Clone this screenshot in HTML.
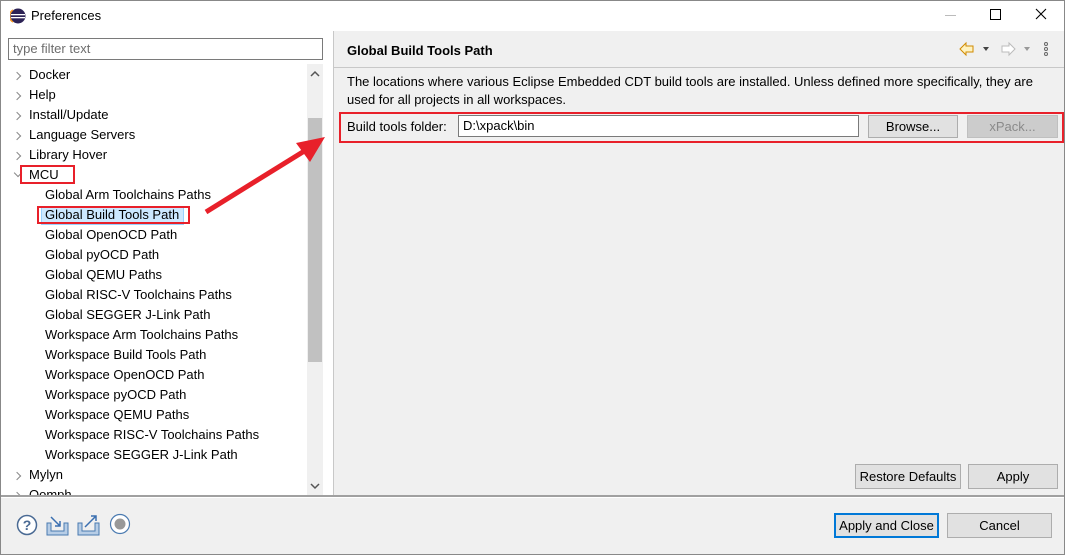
<!DOCTYPE html><html><head><style>
body{margin:0;width:1065px;height:555px;overflow:hidden;background:#f0f0f0;font-family:"Liberation Sans",sans-serif;font-size:13px;color:#000;position:relative}
.a{position:absolute;white-space:nowrap}
.t{position:absolute;line-height:20px;white-space:nowrap}
.btn{position:absolute;background:#e1e1e1;border:1px solid #adadad;box-sizing:border-box;text-align:center;font-size:13px}
.chev{position:absolute;width:5px;height:5px;border-right:1.5px solid #888;border-top:1.5px solid #888;transform:rotate(45deg)}
</style></head><body>
<div class="a" style="left:0;top:0;width:1063px;height:553px;border:1px solid #888"></div>
<div class="a" style="left:1px;top:1px;width:1063px;height:30px;background:#fff"></div>
<svg class="a" style="left:10px;top:8px" width="16" height="16"><circle cx="8" cy="8" r="7.5" fill="#2c2255"/><rect x="1" y="6" width="14" height="1.3" fill="#fff"/><rect x="1" y="9" width="14" height="1.3" fill="#fff"/><path d="M3 2 A7 7 0 0 0 3 14" stroke="#f7941e" stroke-width="1.5" fill="none"/></svg>
<div class="a" style="left:31px;top:8px;font-size:13px">Preferences</div>
<div class="a" style="left:945px;top:15px;width:11px;height:1px;background:#bbb"></div>
<div class="a" style="left:990px;top:9px;width:9px;height:9px;border:1px solid #000"></div>
<svg class="a" style="left:1035px;top:8px" width="12" height="12"><path d="M1 1L11 11M11 1L1 11" stroke="#000" stroke-width="1.1"/></svg>
<div class="a" style="left:1px;top:31px;width:332px;height:465px;background:#fff"></div>
<div class="a" style="left:8px;top:38px;width:315px;height:22px;border:1px solid #7a7a7a;box-sizing:border-box;background:#fff;color:#6d6d6d;padding:3px 4px;line-height:14px">type filter text</div>
<div class="a" style="left:333px;top:31px;width:1px;height:465px;background:#c8c8c8"></div>
<div class="a" style="left:307px;top:64px;width:16px;height:432px;background:#f0f0f0"></div>
<div class="a" style="left:308px;top:118px;width:14px;height:244px;background:#c1c1c1"></div>
<svg class="a" style="left:310px;top:70px" width="10" height="8"><path d="M1 6L5 2L9 6" stroke="#555" stroke-width="1.5" fill="none"/></svg>
<svg class="a" style="left:310px;top:482px" width="10" height="8"><path d="M1 2L5 6L9 2" stroke="#555" stroke-width="1.5" fill="none"/></svg>
<div style="position:absolute;left:0;top:65px;width:306px;height:431px;overflow:hidden">
<div class="chev" style="left:14px;top:8px"></div><div class="t" style="left:29px;top:0">Docker</div>
<div class="chev" style="left:14px;top:28px"></div><div class="t" style="left:29px;top:20px">Help</div>
<div class="chev" style="left:14px;top:48px"></div><div class="t" style="left:29px;top:40px">Install/Update</div>
<div class="chev" style="left:14px;top:68px"></div><div class="t" style="left:29px;top:60px">Language Servers</div>
<div class="chev" style="left:14px;top:88px"></div><div class="t" style="left:29px;top:80px">Library Hover</div>
<div class="chev" style="left:15px;top:105px;transform:rotate(135deg)"></div><div class="t" style="left:29px;top:100px">MCU</div>
<div class="t" style="left:45px;top:120px">Global Arm Toolchains Paths</div>
<div class="a" style="left:41px;top:141px;width:143px;height:19px;background:#cce8ff;border:1px solid #99d1ff;box-sizing:border-box"></div>
<div class="t" style="left:45px;top:140px">Global Build Tools Path</div>
<div class="t" style="left:45px;top:160px">Global OpenOCD Path</div>
<div class="t" style="left:45px;top:180px">Global pyOCD Path</div>
<div class="t" style="left:45px;top:200px">Global QEMU Paths</div>
<div class="t" style="left:45px;top:220px">Global RISC-V Toolchains Paths</div>
<div class="t" style="left:45px;top:240px">Global SEGGER J-Link Path</div>
<div class="t" style="left:45px;top:260px">Workspace Arm Toolchains Paths</div>
<div class="t" style="left:45px;top:280px">Workspace Build Tools Path</div>
<div class="t" style="left:45px;top:300px">Workspace OpenOCD Path</div>
<div class="t" style="left:45px;top:320px">Workspace pyOCD Path</div>
<div class="t" style="left:45px;top:340px">Workspace QEMU Paths</div>
<div class="t" style="left:45px;top:360px">Workspace RISC-V Toolchains Paths</div>
<div class="t" style="left:45px;top:380px">Workspace SEGGER J-Link Path</div>
<div class="chev" style="left:14px;top:408px"></div><div class="t" style="left:29px;top:400px">Mylyn</div>
<div class="chev" style="left:14px;top:428px"></div><div class="t" style="left:29px;top:420px">Oomph</div>
</div>
<div class="a" style="left:20px;top:165px;width:55px;height:19px;border:2px solid #e8202a;box-sizing:border-box"></div>
<div class="a" style="left:37px;top:206px;width:153px;height:18px;border:2px solid #e8202a;box-sizing:border-box"></div>
<svg class="a" style="left:0;top:0" width="340" height="240"><path d="M206 212L306 150" stroke="#e8202a" stroke-width="5"/><path d="M325 137L296 143L310 162Z" fill="#e8202a"/></svg>
<div class="a" style="left:347px;top:43px;font-weight:bold;font-size:13px">Global Build Tools Path</div>
<svg class="a" style="left:958px;top:41px" width="95" height="16"><path d="M2 8L8 2V5H15V11H8V14Z" fill="#fff3c0" stroke="#d08a00"/><path d="M25 6H31L28 10Z" fill="#444"/><path d="M57 8L51 2V5H44V11H51V14Z" fill="#fff" stroke="#bbb"/><path d="M66 6H72L69 10Z" fill="#999"/><circle cx="88" cy="3" r="1.5" fill="none" stroke="#666"/><circle cx="88" cy="8" r="1.5" fill="none" stroke="#666"/><circle cx="88" cy="13" r="1.5" fill="none" stroke="#666"/></svg>
<div class="a" style="left:334px;top:67px;width:730px;height:1px;background:#c8c8c8"></div>
<div class="a" style="left:347px;top:73px;line-height:18px;white-space:normal;width:705px">The locations where various Eclipse Embedded CDT build tools are installed. Unless defined more specifically, they are used for all projects in all workspaces.</div>
<div class="a" style="left:339px;top:112px;width:725px;height:31px;border:2px solid #e8202a;box-sizing:border-box"></div>
<div class="a" style="left:347px;top:119px">Build tools folder:</div>
<div class="a" style="left:458px;top:115px;width:401px;height:22px;border:1px solid #7a7a7a;box-sizing:border-box;background:#fff;padding:3px 4px;line-height:14px">D:\xpack\bin</div>
<div class="btn" style="left:868px;top:115px;width:90px;height:23px;line-height:21px">Browse...</div>
<div class="btn" style="left:967px;top:115px;width:91px;height:23px;line-height:21px;background:#ccc;border-color:#bfbfbf;color:#8a8a8a">xPack...</div>
<div class="btn" style="left:855px;top:464px;width:106px;height:25px;line-height:23px">Restore Defaults</div>
<div class="btn" style="left:968px;top:464px;width:90px;height:25px;line-height:23px">Apply</div>
<div class="a" style="left:1px;top:495px;width:1063px;height:2px;background:#a0a0a0;border-bottom:1px solid #fff"></div>
<div class="btn" style="left:834px;top:513px;width:105px;height:25px;line-height:21px;border:2px solid #0078d7">Apply and Close</div>
<div class="btn" style="left:947px;top:513px;width:105px;height:25px;line-height:23px">Cancel</div>
<svg class="a" style="left:15px;top:513px" width="120" height="26"><circle cx="12" cy="12" r="9.5" fill="#fff" stroke="#4a6a94" stroke-width="1.5"/><text x="12" y="17" font-family="Liberation Sans" font-size="14" font-weight="bold" fill="#4a6a94" text-anchor="middle">?</text><path d="M32 10V22H53V10H49V18H36V10Z" fill="#b7cde6" stroke="#4a7ab0"/><path d="M36 4L45 13M45 8V13H40" stroke="#3a6fb0" stroke-width="1.5" fill="none"/><path d="M63 10V22H84V10H80V18H67V10Z" fill="#b7cde6" stroke="#4a7ab0"/><path d="M70 14L81 3M76 3H81V8" stroke="#3a6fb0" stroke-width="1.5" fill="none"/><circle cx="105" cy="11" r="9.5" fill="#fff" stroke="#4a7ab0" stroke-width="1.2"/><circle cx="105" cy="11" r="5.5" fill="#999"/></svg>
</body></html>
